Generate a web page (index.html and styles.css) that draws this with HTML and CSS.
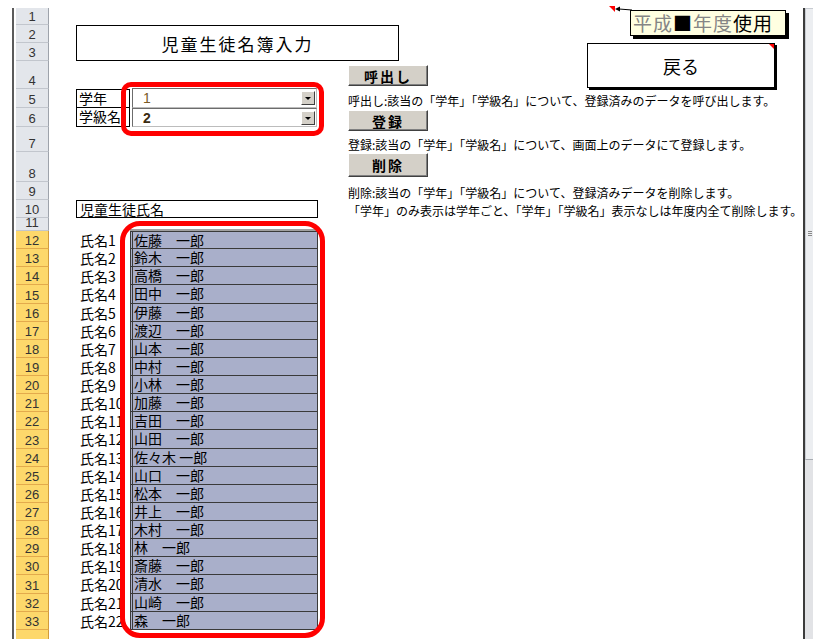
FILE: index.html
```html
<!DOCTYPE html>
<html lang="ja">
<head>
    <meta charset="utf-8">
    <title>児童生徒名簿入力</title>
    <link rel="stylesheet" href="styles.css">
</head>
<body>
<div class="window">
    <div class="sheet">
        <div class="grid">
            <div class="rh">1</div>
            <div class="rh">2</div>
            <div class="rh">3</div>
            <div class="rh">4</div>
            <div class="rh">5</div>
            <div class="rh">6</div>
            <div class="rh">7</div>
            <div class="rh">8</div>
            <div class="rh">9</div>
            <div class="rh">10</div>
            <div class="rh">11</div>
            <div class="rh sel">12</div>
            <div class="rh sel">13</div>
            <div class="rh sel">14</div>
            <div class="rh sel">15</div>
            <div class="rh sel">16</div>
            <div class="rh sel">17</div>
            <div class="rh sel">18</div>
            <div class="rh sel">19</div>
            <div class="rh sel">20</div>
            <div class="rh sel">21</div>
            <div class="rh sel">22</div>
            <div class="rh sel">23</div>
            <div class="rh sel">24</div>
            <div class="rh sel">25</div>
            <div class="rh sel">26</div>
            <div class="rh sel">27</div>
            <div class="rh sel">28</div>
            <div class="rh sel">29</div>
            <div class="rh sel">30</div>
            <div class="rh sel">31</div>
            <div class="rh sel">32</div>
            <div class="rh sel">33</div>
            <div class="rh sel">34</div>

            <div class="title">児童生徒名簿入力</div>
            <div class="back">戻る<span class="mark"></span></div>

            <button class="btn btn-call">呼出し</button>
            <div class="note note-call">呼出し:該当の「学年」「学級名」について、登録済みのデータを呼び出します。</div>

            <div class="lab lab-year">学年</div>
            <div class="lab lab-class">学級名</div>
            <div class="combo combo-year"><span class="val v1">1</span><span class="drop"></span></div>
            <div class="combo combo-class"><span class="val v2">2</span><span class="drop"></span></div>

            <button class="btn btn-save">登録</button>
            <div class="note note-save">登録:該当の「学年」「学級名」について、画面上のデータにて登録します。</div>

            <button class="btn btn-del">削除</button>
            <div class="note note-del">削除:該当の「学年」「学級名」について、登録済みデータを削除します。</div>
            <div class="note note-del2">「学年」のみ表示は学年ごと、「学年」「学級名」表示なしは年度内全て削除します。</div>

            <div class="namehead">児童生徒氏名</div>

            <div class="names">
                <div class="nl">氏名1</div><div class="nv">佐藤　一郎</div>
                <div class="nl">氏名2</div><div class="nv">鈴木　一郎</div>
                <div class="nl">氏名3</div><div class="nv">高橋　一郎</div>
                <div class="nl">氏名4</div><div class="nv">田中　一郎</div>
                <div class="nl">氏名5</div><div class="nv">伊藤　一郎</div>
                <div class="nl">氏名6</div><div class="nv">渡辺　一郎</div>
                <div class="nl">氏名7</div><div class="nv">山本　一郎</div>
                <div class="nl">氏名8</div><div class="nv">中村　一郎</div>
                <div class="nl">氏名9</div><div class="nv">小林　一郎</div>
                <div class="nl">氏名10</div><div class="nv">加藤　一郎</div>
                <div class="nl">氏名11</div><div class="nv">吉田　一郎</div>
                <div class="nl">氏名12</div><div class="nv">山田　一郎</div>
                <div class="nl">氏名13</div><div class="nv">佐々木 一郎</div>
                <div class="nl">氏名14</div><div class="nv">山口　一郎</div>
                <div class="nl">氏名15</div><div class="nv">松本　一郎</div>
                <div class="nl">氏名16</div><div class="nv">井上　一郎</div>
                <div class="nl">氏名17</div><div class="nv">木村　一郎</div>
                <div class="nl">氏名18</div><div class="nv">林　一郎</div>
                <div class="nl">氏名19</div><div class="nv">斎藤　一郎</div>
                <div class="nl">氏名20</div><div class="nv">清水　一郎</div>
                <div class="nl">氏名21</div><div class="nv">山崎　一郎</div>
                <div class="nl">氏名22</div><div class="nv">森　一郎</div>
            </div>
        </div>

        <!-- comment popup with its pointer -->
        <svg class="pointer" width="26" height="10" viewBox="0 0 26 10">
            <polygon points="3,1 9,1 9,7" fill="#ff0000"/>
            <polygon points="9,4 14,1.5 14,6.5" fill="#000"/>
            <line x1="13" y1="4" x2="26" y2="5" stroke="#000" stroke-width="1"/>
        </svg>
        <div class="comment"><span class="dim">平成</span>■<span class="dim">年度</span>使用</div>

        <!-- red marks drawn over the sheet -->
        <div class="ring ring-top"></div>
        <div class="ring ring-list"></div>
    </div>

    <div class="vscroll">
        <div class="bar">
            <div class="thumb"><span class="grip"></span></div>
            <div class="track"></div>
        </div>
    </div>
</div>
</body>
</html>
```

FILE: styles.css
```css
body {
    margin: 0;
    overflow: hidden;
    background: #fff;
    color: #000;
    font-family: "Noto Sans CJK JP", sans-serif;
}

.window {
    display: flex;
    width: 813px;
    height: 639px;
}

.sheet {
    position: relative;
    flex: 1;
    padding: 8px 0 0 12px;
    overflow: hidden;
}

.grid {
    display: grid;
    border-left: 2px solid #5b5b5b;
    padding-left: 2px;
    grid-template-columns: 33px 27px 54px 188px 30px 1fr;
    grid-template-rows: 17px 18px 18px 28px 19px 19px 25px 30px 18px 18px 13px repeat(22, 18.14px) 26px;
}

/* row headers */
.rh {
    grid-column: 1;
    display: flex;
    align-items: flex-end;
    justify-content: center;
    box-sizing: border-box;
    overflow: hidden;
    background: #e3e6eb;
    border-bottom: 1px solid #c2c6cd;
    border-right: 1px solid #9ea3ab;
    color: #333;
    font-family: "Liberation Sans", sans-serif;
    font-size: 13px;
    line-height: 15px;
}

.rh.sel {
    background: #fdd86b;
    border-bottom-color: #e3aa4c;
    border-right-color: #d19b3b;
}

.title {
    grid-row: 2 / 4;
    grid-column: 3 / 7;
    width: 323px;
    box-sizing: border-box;
    border: 1px solid #000;
    display: flex;
    align-items: center;
    justify-content: center;
    font-size: 17px;
    letter-spacing: 2px;
}

.back {
    position: relative;
    grid-row: 3 / 5;
    grid-column: 6;
    align-self: start;
    margin-left: 239px;
    width: 188px;
    height: 45px;
    box-sizing: border-box;
    border: 1px solid #000;
    box-shadow: 2px 2px 0 #000;
    display: flex;
    align-items: center;
    justify-content: center;
    font-size: 18px;
}

.back .mark {
    position: absolute;
    top: 0;
    right: 0;
    border-left: 5px solid transparent;
    border-top: 5px solid #ff0000;
}

/* form buttons */
.btn {
    grid-column: 6;
    align-self: start;
    width: 80px;
    padding: 0;
    box-sizing: border-box;
    background: #d4d0c8;
    border: 1px solid;
    border-color: #fff #404040 #404040 #fff;
    box-shadow: inset -1px -1px 0 #808080;
    color: #000;
    font: bold 14px "Noto Sans CJK JP", sans-serif;
    line-height: 18px;
    letter-spacing: 2px;
}

.btn-call {
    grid-row: 4;
    margin-top: 4px;
    height: 21px;
}

.btn-save {
    grid-row: 6;
    margin-top: 2px;
    height: 21px;
}

.btn-del {
    grid-row: 8;
    margin-top: 1px;
    height: 24px;
}

.note {
    grid-column: 6;
    align-self: end;
    font-size: 12px;
    line-height: 15px;
    white-space: nowrap;
}

.note-call { grid-row: 5; }
.note-save { grid-row: 7; }
.note-del { grid-row: 9; }
.note-del2 { grid-row: 10; }

/* 学年 / 学級名 */
.lab {
    grid-column: 3;
    box-sizing: border-box;
    border: 1px solid #000;
    padding-left: 2px;
    font-size: 14px;
    line-height: 17px;
    white-space: nowrap;
    overflow: hidden;
}

.lab-year { grid-row: 5; }

.lab-class {
    grid-row: 6;
    border-top: none;
}

.combo {
    grid-column: 4;
    margin: 0 1px 0 2px;
    display: flex;
    align-items: center;
    box-sizing: border-box;
    border: 1px solid #6c6c6c;
    border-right-color: #bcbcbc;
    border-bottom-color: #bcbcbc;
    background: #fff;
}

.combo-year {
    grid-row: 5;
    margin-top: -1px;
}

.combo-class { grid-row: 6; }

.val {
    flex: 1;
    padding-left: 10px;
    font-family: "Liberation Sans", sans-serif;
    font-size: 14px;
    line-height: 16px;
}

.v1 { color: #7a5a24; }

.v2 {
    color: #3b2b10;
    font-weight: bold;
}

.drop {
    position: relative;
    width: 14px;
    height: 14px;
    margin-right: 1px;
    box-sizing: border-box;
    background: #d4d0c8;
    border: 1px solid;
    border-color: #fff #404040 #404040 #fff;
}

.drop::after {
    content: "";
    position: absolute;
    left: 3px;
    top: 5px;
    border-left: 3px solid transparent;
    border-right: 3px solid transparent;
    border-top: 3px solid #000;
}

.namehead {
    grid-row: 10;
    grid-column: 3 / 5;
    box-sizing: border-box;
    border: 1px solid #000;
    padding-left: 3px;
    font-size: 14px;
    line-height: 16px;
}

/* name list */
.names {
    grid-row: 12 / 34;
    grid-column: 3 / 5;
    display: grid;
    grid-template-columns: 54px 188px;
    grid-template-rows: repeat(22, 1fr);
}

.nl {
    padding-left: 4px;
    font-size: 14px;
    line-height: 18px;
    white-space: nowrap;
    overflow: hidden;
}

.nv {
    box-sizing: border-box;
    background: #a9afca;
    border-left: 3px double #3a3a3a;
    border-right: 1px solid #3a3a3a;
    border-bottom: 1px solid #3a3a3a;
    padding-left: 1px;
    font-size: 14px;
    line-height: 17px;
    white-space: nowrap;
    overflow: hidden;
}

.names .nv:nth-child(2) {
    border-top: 1px solid #3a3a3a;
    box-shadow: 0 -2px 0 #a0a0a0;
}

/* comment popup */
.pointer {
    position: absolute;
    left: 606px;
    top: 5px;
}

.comment {
    position: absolute;
    left: 630px;
    top: 10px;
    width: 156px;
    height: 26px;
    box-sizing: border-box;
    background: #ffffe1;
    border: 1px solid #000;
    box-shadow: 3px 3px 0 #000;
    padding-left: 2px;
    font-size: 19px;
    line-height: 24px;
    letter-spacing: 1px;
    white-space: nowrap;
}

.comment .dim { color: #858585; }

.ring {
    position: absolute;
    box-sizing: border-box;
    border: 5px solid #ff0000;
}

.ring-top {
    left: 121px;
    top: 82px;
    width: 203px;
    height: 54px;
    border-radius: 10px;
}

.ring-list {
    left: 120px;
    top: 221px;
    width: 205px;
    height: 417px;
    border-radius: 20px;
}

/* right scroll bar */
.vscroll {
    width: 10px;
    padding-top: 8px;
    display: flex;
}

.bar {
    flex: 1;
    display: flex;
    flex-direction: column;
    border-left: 2px solid #3c3c3c;
}

.thumb {
    position: relative;
    height: 450px;
    background: #eceef1;
    border-left: 1px solid #c8ccd2;
    border-top: 1px solid #c8ccd2;
    border-bottom: 1px solid #a8acb2;
}

.grip {
    position: absolute;
    left: 2px;
    top: 222px;
    width: 4px;
    height: 5px;
    background: repeating-linear-gradient(#888 0 1px, transparent 1px 2px);
}

.track {
    flex: 1;
    background: #e2e3e6;
}
```
